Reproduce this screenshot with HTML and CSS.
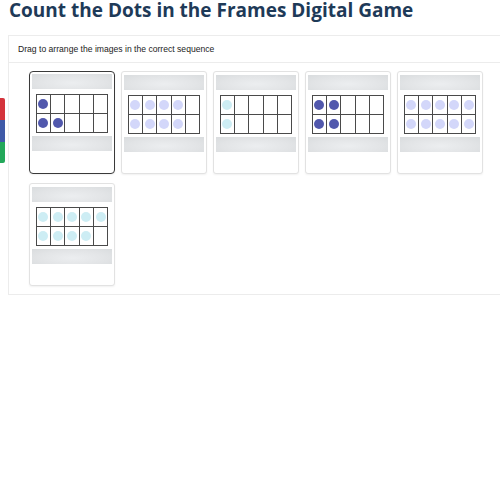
FILE: index.html
```html
<!DOCTYPE html>
<html lang="en">
<head>
<meta charset="utf-8">
<title>Count the Dots in the Frames Digital Game</title>
<link rel="stylesheet" href="styles.css">
</head>
<body>
<div class="side-tabs">
  <span class="tab tab-red"></span>
  <span class="tab tab-blue"></span>
  <span class="tab tab-green"></span>
</div>
<h1 class="title">Count the Dots in the Frames Digital Game</h1>
<section class="panel">
  <div class="panel-head">Drag to arrange the images in the correct sequence</div>
  <div class="panel-body">
    <div class="card selected">
      <div class="bar"></div>
      <div class="frame">
        <div class="cell"><i class="dot dark"></i></div><div class="cell"></div><div class="cell"></div><div class="cell"></div><div class="cell"></div>
        <div class="cell"><i class="dot dark"></i></div><div class="cell"><i class="dot dark"></i></div><div class="cell"></div><div class="cell"></div><div class="cell"></div>
      </div>
      <div class="bar"></div>
    </div>
    <div class="card">
      <div class="bar"></div>
      <div class="frame">
        <div class="cell"><i class="dot lav"></i></div><div class="cell"><i class="dot lav"></i></div><div class="cell"><i class="dot lav"></i></div><div class="cell"><i class="dot lav"></i></div><div class="cell"></div>
        <div class="cell"><i class="dot lav"></i></div><div class="cell"><i class="dot lav"></i></div><div class="cell"><i class="dot lav"></i></div><div class="cell"><i class="dot lav"></i></div><div class="cell"></div>
      </div>
      <div class="bar"></div>
    </div>
    <div class="card">
      <div class="bar"></div>
      <div class="frame">
        <div class="cell"><i class="dot cyan"></i></div><div class="cell"></div><div class="cell"></div><div class="cell"></div><div class="cell"></div>
        <div class="cell"><i class="dot cyan"></i></div><div class="cell"></div><div class="cell"></div><div class="cell"></div><div class="cell"></div>
      </div>
      <div class="bar"></div>
    </div>
    <div class="card">
      <div class="bar"></div>
      <div class="frame">
        <div class="cell"><i class="dot dark"></i></div><div class="cell"><i class="dot dark"></i></div><div class="cell"></div><div class="cell"></div><div class="cell"></div>
        <div class="cell"><i class="dot dark"></i></div><div class="cell"><i class="dot dark"></i></div><div class="cell"></div><div class="cell"></div><div class="cell"></div>
      </div>
      <div class="bar"></div>
    </div>
    <div class="card">
      <div class="bar"></div>
      <div class="frame">
        <div class="cell"><i class="dot lav"></i></div><div class="cell"><i class="dot lav"></i></div><div class="cell"><i class="dot lav"></i></div><div class="cell"><i class="dot lav"></i></div><div class="cell"><i class="dot lav"></i></div>
        <div class="cell"><i class="dot lav"></i></div><div class="cell"><i class="dot lav"></i></div><div class="cell"><i class="dot lav"></i></div><div class="cell"><i class="dot lav"></i></div><div class="cell"><i class="dot lav"></i></div>
      </div>
      <div class="bar"></div>
    </div>
    <div class="card">
      <div class="bar"></div>
      <div class="frame">
        <div class="cell"><i class="dot cyan"></i></div><div class="cell"><i class="dot cyan"></i></div><div class="cell"><i class="dot cyan"></i></div><div class="cell"><i class="dot cyan"></i></div><div class="cell"><i class="dot cyan"></i></div>
        <div class="cell"><i class="dot cyan"></i></div><div class="cell"><i class="dot cyan"></i></div><div class="cell"><i class="dot cyan"></i></div><div class="cell"><i class="dot cyan"></i></div><div class="cell"></div>
      </div>
      <div class="bar"></div>
    </div>
  </div>
</section>
</body>
</html>
```
FILE: styles.css
```css
html, body {
  margin: 0;
  padding: 0;
  background: #ffffff;
}
body {
  padding: 0 0 0 8px;
  font-family: "Liberation Sans", Arial, sans-serif;
  overflow: hidden;
}
.title {
  margin: 0;
  padding: 0 0 0 1px;
  font-family: "Open Sans", sans-serif;
  font-weight: 700;
  font-size: 19px;
  line-height: 21px;
  color: #1e3a58;
  white-space: nowrap;
}
.panel {
  margin-top: 14px;
  border: 1px solid #ececec;
  border-right: none;
  background: #ffffff;
}
.panel-head {
  height: 26px;
  line-height: 27px;
  padding-left: 9px;
  font-size: 8.6px;
  color: #222;
  border-bottom: 1px solid #ececec;
}
.panel-body {
  display: grid;
  grid-template-columns: repeat(5, 86px);
  column-gap: 6px;
  row-gap: 9px;
  padding: 8px 0 8px 20px;
}
.card {
  box-sizing: border-box;
  height: 103px;
  border: 1px solid #e2e2e2;
  border-radius: 3px;
  box-shadow: 0 1px 2px rgba(0,0,0,0.06);
  padding: 3px 2px 0 2px;
  display: flex;
  flex-direction: column;
  align-items: center;
  background: #fff;
}
.card.selected {
  border: 1.5px solid #3a3a3a;
  border-radius: 4px;
  padding: 2px 1.5px 0 1.5px;
}
.bar {
  width: 80px;
  height: 15px;
  background: radial-gradient(ellipse at 50% 60%, #eceef0 0%, #e2e4e6 60%, #d9dcde 100%);
  flex: none;
}
.frame {
  margin: 5px 0 3px;
  display: grid;
  grid-template-columns: repeat(5, 13.4px);
  grid-template-rows: repeat(2, 18px);
  gap: 1px;
  background: #4a4a4a;
  border: 1px solid #4a4a4a;
  flex: none;
}
.cell {
  background: #fff;
  display: flex;
  align-items: center;
  justify-content: center;
}
.dot {
  display: block;
  width: 10px;
  height: 10px;
  border-radius: 50%;
}
.dot.dark { background: #5158ad; }
.dot.lav { background: #d3d7fa; }
.dot.cyan { background: #cdedf4; }
.side-tabs {
  position: absolute;
  left: 0;
  top: 98px;
  width: 5px;
  display: flex;
  flex-direction: column;
}
.tab {
  display: block;
  height: 22px;
}
.tab-red { background: #d4343c; border-top-right-radius: 2px; }
.tab-blue { background: #3f5aa8; }
.tab-green { background: #23a85a; height: 21px; border-bottom-right-radius: 2px; }
```
